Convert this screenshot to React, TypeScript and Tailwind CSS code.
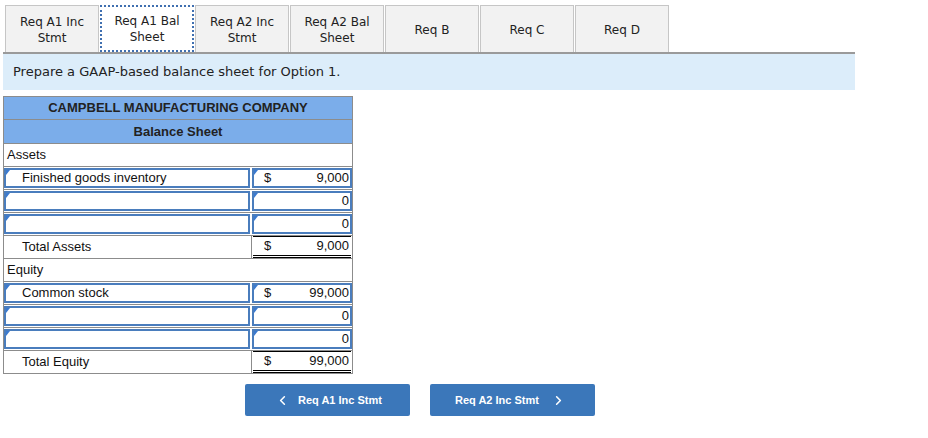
import React from "react";
import { ChevronLeft, ChevronRight } from "lucide-react";

const tabs = [
  ["Req A1 Inc", "Stmt"],
  ["Req A1 Bal", "Sheet"],
  ["Req A2 Inc", "Stmt"],
  ["Req A2 Bal", "Sheet"],
  ["Req B"],
  ["Req C"],
  ["Req D"],
];

type Row =
  | { kind: "section"; label: string }
  | { kind: "input"; label: string; dollar?: boolean; value: string }
  | { kind: "total"; label: string; value: string };

const rows: Row[] = [
  { kind: "section", label: "Assets" },
  { kind: "input", label: "Finished goods inventory", dollar: true, value: "9,000" },
  { kind: "input", label: "", value: "0" },
  { kind: "input", label: "", value: "0" },
  { kind: "total", label: "Total Assets", value: "9,000" },
  { kind: "section", label: "Equity" },
  { kind: "input", label: "Common stock", dollar: true, value: "99,000" },
  { kind: "input", label: "", value: "0" },
  { kind: "input", label: "", value: "0" },
  { kind: "total", label: "Total Equity", value: "99,000" },
];

const Corner = () => (
  <span className="absolute left-0 top-0 w-0 h-0 border-t-[5px] border-r-[4px] border-t-[#3b7ad0] border-r-transparent" />
);

const InputBox = ({ children, className }: { children?: React.ReactNode; className?: string }) => (
  <div className={`relative h-full border-2 border-[#4a7dbd] bg-white flex items-center ${className ?? ""}`}>
    <Corner />
    {children}
  </div>
);

const renderRow = (row: Row, i: number) => {
  if (row.kind === "section") {
    return (
      <div key={i} className="h-[23px] border-b border-[#8c8c8c] flex items-center pl-[3px]">
        {row.label}
      </div>
    );
  }
  if (row.kind === "input") {
    return (
      <div key={i} className="h-[23px] border-b border-[#8c8c8c] flex">
        <div className="w-[248px] py-px pr-[2px]">
          <InputBox className="pl-[16px]">{row.label}</InputBox>
        </div>
        <div className="flex-1 py-px">
          <InputBox className="pl-[10px] pr-[1px]">
            <span className="w-[20px]">{row.dollar ? "$" : ""}</span>
            <span className="flex-1 text-right">{row.value}</span>
          </InputBox>
        </div>
      </div>
    );
  }
  return (
    <div key={i} className="h-[23px] border-b border-[#8c8c8c] flex">
      <div className="w-[248px] border-r border-[#8c8c8c] flex items-center pl-[18px]">{row.label}</div>
      <div className="flex-1 px-px">
        <div className="h-full flex items-center pl-[11px] pr-[2px] border-t border-black border-b-[3px] border-b-black border-double">
          <span className="w-[20px]">$</span>
          <span className="flex-1 text-right">{row.value}</span>
        </div>
      </div>
    </div>
  );
};

export default function App() {
  return (
    <div className="w-[928px] h-[438px] bg-white relative">
      {/* TABS */}
      <div className="pt-[5px] pl-[3px] w-[855px]">
        <div className="flex gap-px pl-[2px] border-b-2 border-[#9a9a9a]">
          {tabs.map((t, i) => (
            <div
              key={i}
              className={`w-[94px] h-[47px] pt-px flex flex-col items-center justify-center text-[12px] leading-[16px] text-[#222] ${
                i === 1
                  ? "bg-white border-2 border-dotted border-[#3f6fb0] mb-[-2px]"
                  : "bg-[#f2f2f2] border border-b-0 border-[#c6c6c6]"
              }`}
              style={{ fontFamily: '"DejaVu Sans", Verdana, sans-serif' }}
            >
              {t.map((line, j) => (
                <span key={j}>{line}</span>
              ))}
            </div>
          ))}
        </div>
        {/* INSTRUCTION */}
        <div
          className="h-[36px] bg-[#dcedfa] flex items-center pl-[10px] text-[13px] text-[#222]"
          style={{ fontFamily: '"DejaVu Sans", Verdana, sans-serif' }}
        >
          Prepare a GAAP-based balance sheet for Option 1.
        </div>
      </div>

      {/* TABLE */}
      <div
        className="mt-[6px] ml-[3px] w-[350px] border border-[#8c8c8c] border-b-0 text-[13px] text-[#111]"
        style={{ fontFamily: '"Liberation Sans", Arial, sans-serif' }}
      >
        <div className="h-[23px] bg-[#7badea] border-b border-[#8c8c8c] flex items-center justify-center font-bold text-[#222]">
          CAMPBELL MANUFACTURING COMPANY
        </div>
        <div className="h-[24px] bg-[#7badea] border-b border-[#8c8c8c] flex items-center justify-center font-bold text-[#222]">
          Balance Sheet
        </div>
        {rows.map(renderRow)}
      </div>

      {/* NAV BUTTONS */}
      <div
        className="flex gap-[20px] ml-[245px] mt-[10px] text-[11px] font-bold text-white"
        style={{ fontFamily: '"Liberation Sans", Arial, sans-serif' }}
      >
        <button className="w-[165px] h-[32px] bg-[#3b77ba] rounded-[2px] flex items-center pl-[30px]">
          <ChevronLeft size={15} strokeWidth={2.5} />
          <span className="ml-[8px]">Req A1 Inc Stmt</span>
        </button>
        <button className="w-[165px] h-[32px] bg-[#3b77ba] rounded-[2px] flex items-center pl-[25px]">
          <span>Req A2 Inc Stmt</span>
          <ChevronRight size={15} strokeWidth={2.5} className="ml-[12px]" />
        </button>
      </div>
    </div>
  );
}
